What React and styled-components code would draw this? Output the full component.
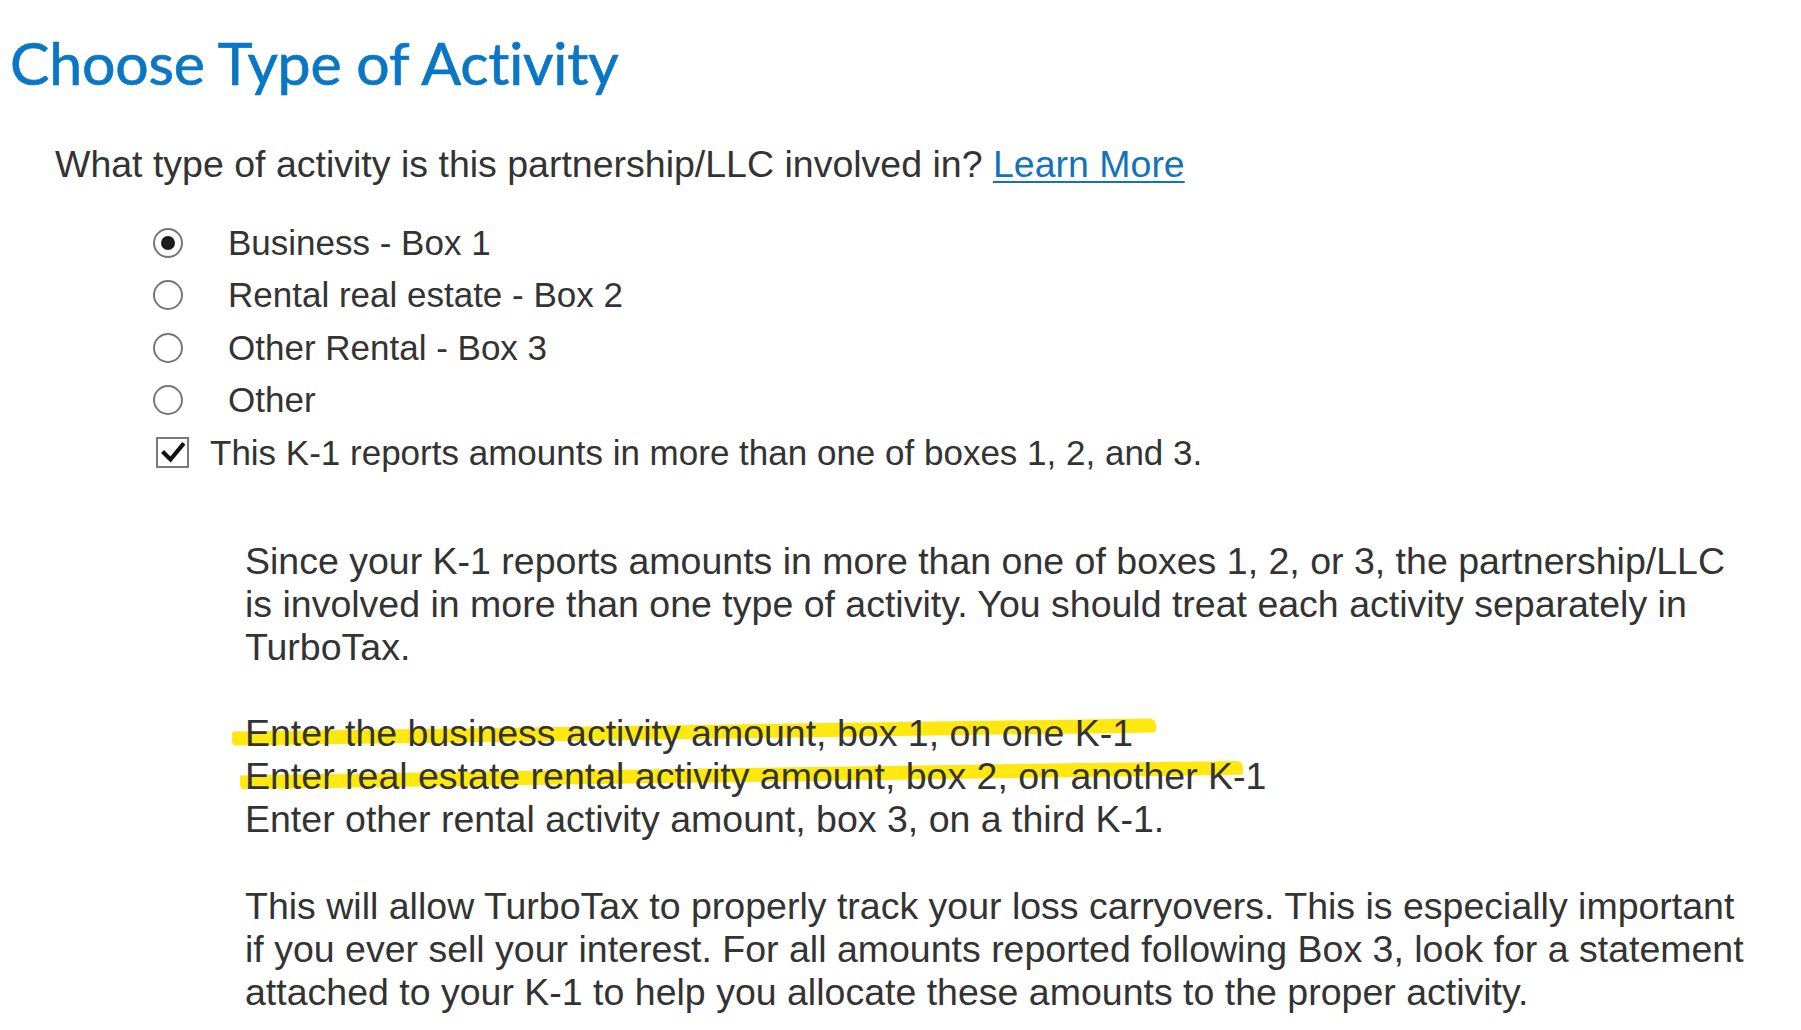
import React from "react";
import styled, { createGlobalStyle } from "styled-components";

const GlobalStyle = createGlobalStyle`
  html, body {
    margin: 0;
    padding: 0;
    background: #ffffff;
  }
  body {
    font-family: "Liberation Sans", Arial, sans-serif;
    color: #333333;
  }
`;

const Page = styled.div`
  width: 1801px;
  min-height: 1030px;
  box-sizing: border-box;
  padding-bottom: 20px;
`;

const Title = styled.h1`
  margin: 28px 0 0 10px;
  font-family: Lato, "Open Sans", sans-serif;
  font-weight: 400;
  font-size: 59px;
  line-height: 70px;
  color: #0a77c4;
  letter-spacing: -0.2px;
  -webkit-text-stroke: 0.7px #0a77c4;
`;

const Question = styled.p`
  margin: 45px 0 0 55px;
  font-size: 37.5px;
  line-height: 43.5px;
  color: #333333;
`;

const LearnMore = styled.a`
  color: #1472b8;
  text-decoration: underline;
  text-decoration-thickness: 2px;
  text-underline-offset: 4px;
  cursor: pointer;
`;

const Options = styled.div`
  margin-top: 30px;
  padding-left: 153px;
  display: flex;
  flex-direction: column;
`;

const Row = styled.label`
  height: 52.5px;
  display: flex;
  align-items: center;
  gap: ${(p) => p.$gap}px;
  margin-left: ${(p) => p.$indent || 0}px;
  font-size: 35px;
  color: #333333;
  cursor: pointer;
`;

const RadioCircle = styled.span`
  width: 30px;
  height: 30px;
  box-sizing: border-box;
  border: 2px solid #777777;
  border-radius: 50%;
  display: flex;
  align-items: center;
  justify-content: center;
  flex: none;

  &::after {
    content: "";
    width: 14px;
    height: 14px;
    border-radius: 50%;
    background: ${(p) => (p.$checked ? "#1c1c1c" : "transparent")};
  }
`;

const CheckSquare = styled.span`
  width: 33px;
  height: 31px;
  box-sizing: border-box;
  border: 2px solid #7a7a7a;
  display: flex;
  align-items: center;
  justify-content: center;
  flex: none;
`;

const Notes = styled.div`
  margin-top: 61px;
  padding-left: 245px;
  width: 1510px;
`;

const Para = styled.p`
  margin: 0 0 43.07px;
  font-size: 37.5px;
  line-height: 43.07px;
  color: #333333;
`;

const Marked = styled.span`
  position: relative;
  z-index: 0;

  &::before {
    content: "";
    position: absolute;
    z-index: -1;
    left: ${(p) => p.$left}px;
    width: ${(p) => p.$width}px;
    top: 13px;
    height: 14px;
    background: #ffe80f;
    border-radius: 2px 6px 3px 4px;
    transform: rotate(-0.82deg);
  }
`;

const options = [
  { label: "Business - Box 1", checked: true },
  { label: "Rental real estate - Box 2", checked: false },
  { label: "Other Rental - Box 3", checked: false },
  { label: "Other", checked: false },
];

function CheckMark() {
  return (
    <svg width="24" height="22" viewBox="0 0 24 22">
      <path d="M3 11 L9.5 17.5 L21.5 3" fill="none" stroke="#111" strokeWidth="4.2" strokeLinecap="square" />
    </svg>
  );
}

export default function App() {
  return (
    <Page>
      <GlobalStyle />
      <Title>Choose Type of Activity</Title>
      <Question>
        What type of activity is this partnership/LLC involved in? <LearnMore>Learn More</LearnMore>
      </Question>

      <Options>
        {options.map((o) => (
          <Row key={o.label} $gap={45}>
            <RadioCircle $checked={o.checked} />
            {o.label}
          </Row>
        ))}
        <Row $gap={21} $indent={3}>
          <CheckSquare>
            <CheckMark />
          </CheckSquare>
          This K-1 reports amounts in more than one of boxes 1, 2, and 3.
        </Row>
      </Options>

      <Notes>
        <Para>
          Since your K-1 reports amounts in more than one of boxes 1, 2, or 3, the partnership/LLC is involved in more
          than one type of activity. You should treat each activity separately in TurboTax.
        </Para>
        <Para>
          <Marked $left={-13} $width={924}>Enter the business activity amount, box 1, on one K-1</Marked>
          <br />
          <Marked $left={-5} $width={1003}>Enter real estate rental activity amount, box 2, on another K-1</Marked>
          <br />
          Enter other rental activity amount, box 3, on a third K-1.
        </Para>
        <Para>
          This will allow TurboTax to properly track your loss carryovers. This is especially important if you ever
          sell your interest. For all amounts reported following Box 3, look for a statement attached to your K-1 to
          help you allocate these amounts to the proper activity.
        </Para>
      </Notes>
    </Page>
  );
}
